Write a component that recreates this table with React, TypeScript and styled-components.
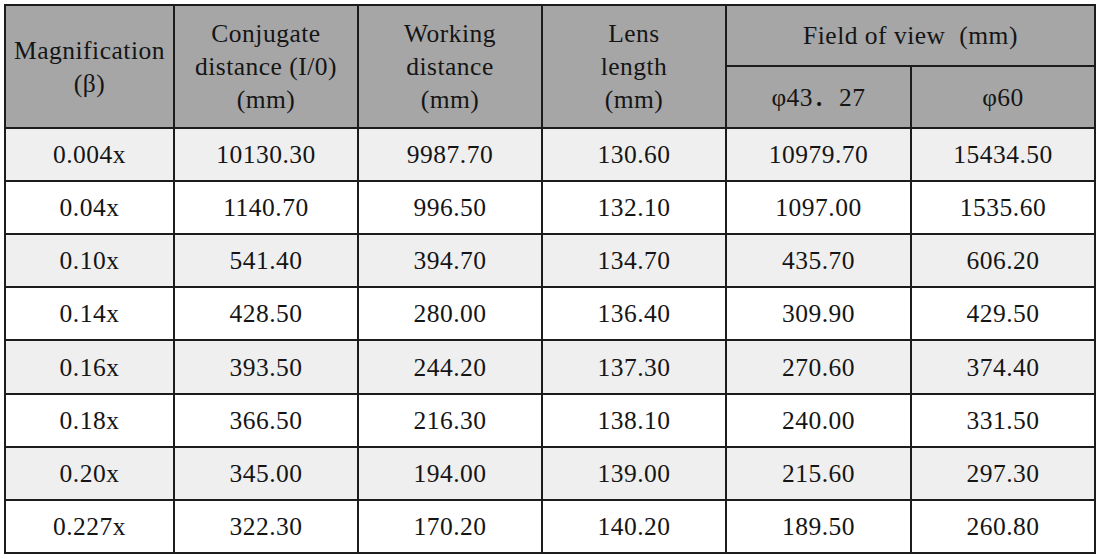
import React from "react";
import styled, { createGlobalStyle } from "styled-components";

const Global = createGlobalStyle`
  html, body { margin: 0; padding: 0; background: #ffffff; }
  body { font-family: "Liberation Serif", "Noto Sans CJK SC", serif; color: #151515; }
`;

const Page = styled.div`
  padding: 4px 0 0 4px;
`;

const Grid = styled.div`
  display: grid;
  width: max-content;
  grid-template-columns: 169px 184px 184px 184px 185px 184px;
  grid-template-rows: 61px 62px 53px 53px 53px 53px 54px 53px 53px 53px;
  border-left: 2px solid #1c1c1c;
  border-top: 2px solid #1c1c1c;
  font-family: "Liberation Serif", "Noto Sans CJK SC", serif;
  font-size: 25.5px;
  letter-spacing: 0.5px;
`;

const Cell = styled.div<{ $bg: string; $rows?: number; $cols?: number }>`
  box-sizing: border-box;
  display: flex;
  align-items: center;
  justify-content: center;
  text-align: center;
  border-right: 2px solid #1c1c1c;
  border-bottom: 2px solid #1c1c1c;
  background: ${(p) => p.$bg};
  grid-row: span ${(p) => p.$rows ?? 1};
  grid-column: span ${(p) => p.$cols ?? 1};
  line-height: 33px;
  white-space: pre-line;
`;

const HEAD = "#a6a6a6";

const rows: string[][] = [
  ["0.004x", "10130.30", "9987.70", "130.60", "10979.70", "15434.50"],
  ["0.04x", "1140.70", "996.50", "132.10", "1097.00", "1535.60"],
  ["0.10x", "541.40", "394.70", "134.70", "435.70", "606.20"],
  ["0.14x", "428.50", "280.00", "136.40", "309.90", "429.50"],
  ["0.16x", "393.50", "244.20", "137.30", "270.60", "374.40"],
  ["0.18x", "366.50", "216.30", "138.10", "240.00", "331.50"],
  ["0.20x", "345.00", "194.00", "139.00", "215.60", "297.30"],
  ["0.227x", "322.30", "170.20", "140.20", "189.50", "260.80"],
];

export default function App() {
  return (
    <Page>
      <Global />
      <Grid>
        <Cell $bg={HEAD} $rows={2}>{"Magnification\n(β)"}</Cell>
        <Cell $bg={HEAD} $rows={2}>{"Conjugate\ndistance (I/0)\n(mm)"}</Cell>
        <Cell $bg={HEAD} $rows={2}>{"Working\ndistance\n(mm)"}</Cell>
        <Cell $bg={HEAD} $rows={2}>{"Lens\nlength\n(mm)"}</Cell>
        <Cell $bg={HEAD} $cols={2}>{"Field of view\u00a0 (mm)"}</Cell>
        <Cell $bg={HEAD}>φ43．27</Cell>
        <Cell $bg={HEAD}>φ60</Cell>
        {rows.map((r, i) =>
          r.map((v, j) => (
            <Cell key={`${i}-${j}`} $bg={i % 2 === 0 ? "#efefef" : "#ffffff"}>
              {v}
            </Cell>
          ))
        )}
      </Grid>
    </Page>
  );
}
